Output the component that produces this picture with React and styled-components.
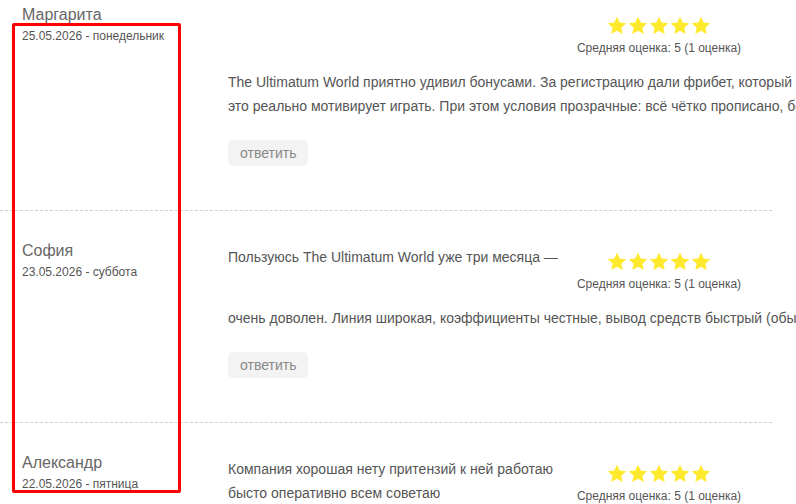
import React from "react";
import styled, { createGlobalStyle } from "styled-components";

const Global = createGlobalStyle`
  html, body { margin: 0; padding: 0; overflow: hidden; background: #fff; }
  body { font-family: "Liberation Sans", Arial, sans-serif; }
`;

const Page = styled.div`
  position: relative;
  width: 796px;
  height: 504px;
  overflow: hidden;
`;

const List = styled.div`
  width: 772px;
  margin-top: -25px;
`;

const Item = styled.div`
  display: flex;
  border-bottom: 1px dashed #cfcfcf;
`;

const Author = styled.div`
  flex: 0 0 206px;
  padding: 30px 0 0 22px;
`;

const Name = styled.div`
  font-size: 16px;
  line-height: 20px;
  color: #666;
  margin-bottom: 3px;
`;

const DateLine = styled.div`
  font-size: 12px;
  line-height: 16px;
  color: #555;
`;

const Main = styled.div`
  flex: 1;
  min-width: 0;
  padding: 34px 0 44px;
`;

const Rating = styled.div`
  float: right;
  width: 170px;
  margin-right: 28px;
  padding: 7px 0 14px;
  text-align: center;
`;

const Stars = styled.div`
  display: flex;
  justify-content: center;
  gap: 1px;
  height: 20px;
`;

const RatingText = styled.div`
  margin-top: 4px;
  font-size: 12px;
  line-height: 16px;
  color: #555;
  white-space: nowrap;
`;

const Line = styled.div`
  font-size: 14px;
  line-height: 24px;
  color: #555;
  white-space: nowrap;
  clear: ${(p) => (p.$wide ? "both" : "none")};
`;

const Reply = styled.button`
  display: block;
  clear: both;
  margin-top: 22px;
  height: 26px;
  padding: 0 12px;
  border: none;
  border-radius: 5px;
  background: #f3f3f3;
  color: #888;
  font-family: "Liberation Sans", Arial, sans-serif;
  font-size: 14px;
  line-height: 26px;
  cursor: pointer;
`;

const Highlight = styled.div`
  position: absolute;
  left: 12px;
  top: 23px;
  width: 163px;
  height: 464px;
  border: 3px solid #ff0000;
  border-radius: 2px;
  pointer-events: none;
`;

const Star = () => (
  <svg width="20" height="19" viewBox="0 0 24 23">
    <path
      d="M12 0.8l3.3 7.1 7.8 0.9-5.8 5.3 1.6 7.7L12 17.9l-6.9 3.9 1.6-7.7-5.8-5.3 7.8-0.9z"
      fill="#ffe92c"
    />
  </svg>
);

const reviews = [
  {
    name: "Маргарита",
    date: "25.05.2026 - понедельник",
    lines: [
      {
        text: "The Ultimatum World приятно удивил бонусами. За регистрацию дали фрибет, который я смог сразу использовать на ставки,",
        wide: true,
      },
      {
        text: "это реально мотивирует играть. При этом условия прозрачные: всё чётко прописано, без скрытых подвохов и мелкого шрифта.",
        wide: true,
      },
    ],
  },
  {
    name: "София",
    date: "23.05.2026 - суббота",
    lines: [
      { text: "Пользуюсь The Ultimatum World уже три месяца —" },
      {
        text: "очень доволен. Линия широкая, коэффициенты честные, вывод средств быстрый (обычно в течение нескольких часов).",
        wide: true,
      },
    ],
  },
  {
    name: "Александр",
    date: "22.05.2026 - пятница",
    lines: [
      { text: "Компания хорошая нету притензий к ней работаю" },
      { text: "бысто оперативно всем советаю" },
    ],
  },
];

export default function App() {
  return (
    <Page>
      <Global />
      <List>
        {reviews.map((r) => (
          <Item key={r.name}>
            <Author>
              <Name>{r.name}</Name>
              <DateLine>{r.date}</DateLine>
            </Author>
            <Main>
              <Rating>
                <Stars>
                  {[0, 1, 2, 3, 4].map((i) => (
                    <Star key={i} />
                  ))}
                </Stars>
                <RatingText>Средняя оценка: 5 (1 оценка)</RatingText>
              </Rating>
              {r.lines.map((l, i) => (
                <Line key={i} $wide={l.wide}>
                  {l.text}
                </Line>
              ))}
              <Reply>ответить</Reply>
            </Main>
          </Item>
        ))}
      </List>
      <Highlight />
    </Page>
  );
}
